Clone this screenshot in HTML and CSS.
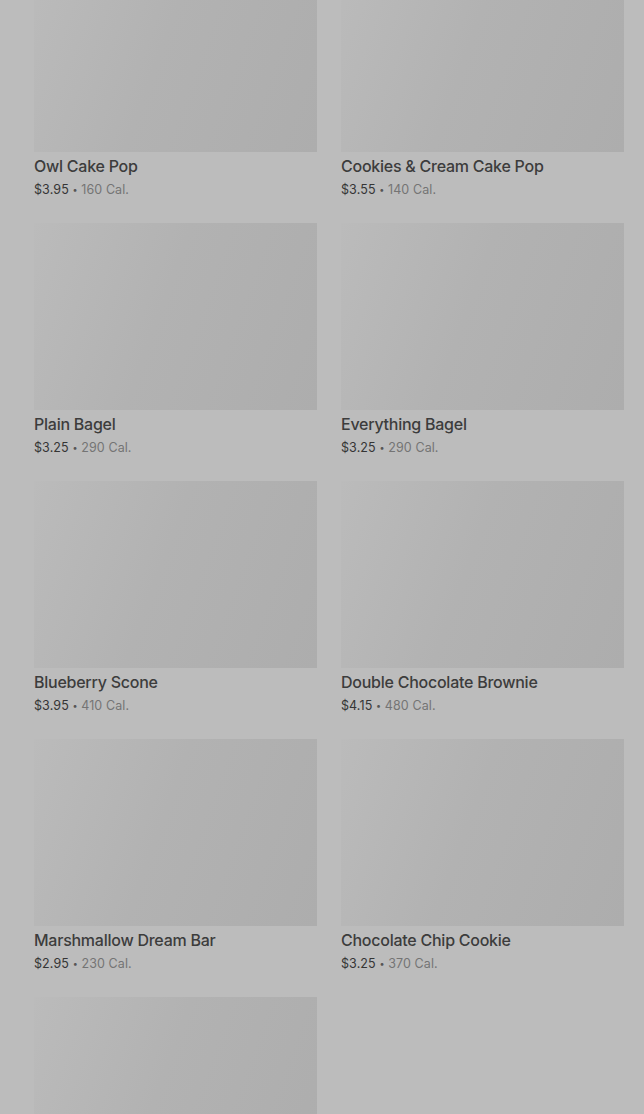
FILE: index.html
```html
<!DOCTYPE html>
<html lang="en">
<head>
    <meta charset="UTF-8">
    <meta name="viewport" content="width=device-width, initial-scale=1.0">
    <title>Bakery</title>
    <link rel="stylesheet" href="styles.css">
</head>
<body>
    <div class="menu-grid">
        <div class="product">
            <div class="product-img"></div>
            <div class="product-name">Owl Cake Pop</div>
            <div class="product-info"><span class="price">$3.95</span> <span class="dot">•</span> <span class="cal">160 Cal.</span></div>
        </div>
        <div class="product">
            <div class="product-img"></div>
            <div class="product-name">Cookies &amp; Cream Cake Pop</div>
            <div class="product-info"><span class="price">$3.55</span> <span class="dot">•</span> <span class="cal">140 Cal.</span></div>
        </div>
        <div class="product">
            <div class="product-img"></div>
            <div class="product-name">Plain Bagel</div>
            <div class="product-info"><span class="price">$3.25</span> <span class="dot">•</span> <span class="cal">290 Cal.</span></div>
        </div>
        <div class="product">
            <div class="product-img"></div>
            <div class="product-name">Everything Bagel</div>
            <div class="product-info"><span class="price">$3.25</span> <span class="dot">•</span> <span class="cal">290 Cal.</span></div>
        </div>
        <div class="product">
            <div class="product-img"></div>
            <div class="product-name">Blueberry Scone</div>
            <div class="product-info"><span class="price">$3.95</span> <span class="dot">•</span> <span class="cal">410 Cal.</span></div>
        </div>
        <div class="product">
            <div class="product-img"></div>
            <div class="product-name">Double Chocolate Brownie</div>
            <div class="product-info"><span class="price">$4.15</span> <span class="dot">•</span> <span class="cal">480 Cal.</span></div>
        </div>
        <div class="product">
            <div class="product-img"></div>
            <div class="product-name">Marshmallow Dream Bar</div>
            <div class="product-info"><span class="price">$2.95</span> <span class="dot">•</span> <span class="cal">230 Cal.</span></div>
        </div>
        <div class="product">
            <div class="product-img"></div>
            <div class="product-name">Chocolate Chip Cookie</div>
            <div class="product-info"><span class="price">$3.25</span> <span class="dot">•</span> <span class="cal">370 Cal.</span></div>
        </div>
        <div class="product">
            <div class="product-img"></div>
        </div>
    </div>
</body>
</html>
```

FILE: styles.css
```css
body {
    margin: 0;
    background-color: #bcbcbc;
    font-family: Inter, "Noto Sans", sans-serif;
    color: #3b3b3b;
    overflow: hidden;
}

/* Grille des produits */
.menu-grid {
    display: grid;
    grid-template-columns: 283px 283px;
    column-gap: 24px;
    row-gap: 24px;
    padding: 0 20px 0 34px;
    margin-top: -35px;
}

.product-img {
    height: 187px;
    background: linear-gradient(110deg, #bbbbbb 0%, #b2b2b2 45%, #adadad 100%);
}

.product-name {
    margin-top: 4px;
    font-size: 16px;
    line-height: 20px;
    font-weight: 500;
    color: #3c3c3c;
    letter-spacing: -0.25px;
}

.product-info {
    margin-top: 5px;
    font-size: 12.5px;
    line-height: 18px;
    color: #555;
    letter-spacing: 0.1px;
}

.product-info .price { color: #353535; }
.product-info .dot { font-size: 9px; color: #555; vertical-align: 1px; }
.product-info .cal { color: #747474; }
```
